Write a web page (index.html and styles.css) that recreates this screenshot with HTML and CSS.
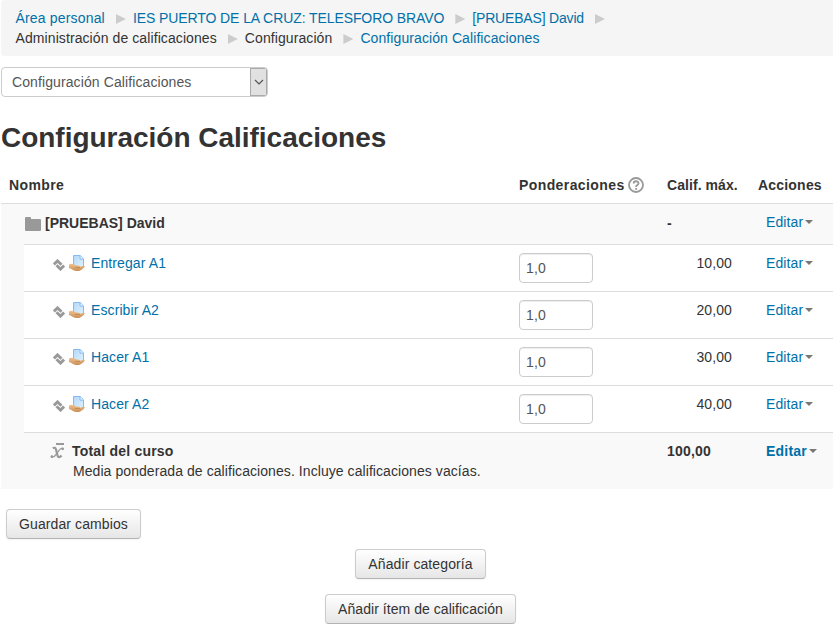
FILE: index.html
```html
<!DOCTYPE html>
<html lang="es">
<head>
<meta charset="utf-8">
<title>Configuración Calificaciones</title>
<link rel="stylesheet" href="styles.css">
</head>
<body>
<svg class="defs" aria-hidden="true">
  <defs>
    <linearGradient id="paper" x1="0" y1="0" x2="1" y2="1"><stop offset="0" stop-color="#b4d9fa"/><stop offset="1" stop-color="#e0f2ff"/></linearGradient>
    <linearGradient id="skin" x1="0" y1="0" x2="0" y2="1"><stop offset="0" stop-color="#f0c18d"/><stop offset="1" stop-color="#c98d55"/></linearGradient>
  </defs>
  <symbol id="move" viewBox="0 0 12 12"><path d="M.9 5.500 4.500 1.900 8.500 5.700M3.500 6.300 7.500 10.100 11.100 6.500" fill="none" stroke="#999" stroke-width="2.900"/></symbol>
  <symbol id="task" viewBox="0 0 16 16"><path d="M4.500.5h6.700l3.300 3.300v9.200h-10z" fill="url(#paper)" stroke="#86baf0"/><path d="M11 .8v3.300h3.300" fill="#eef8ff" stroke="#86baf0"/><path d="M0 9.500c1.700-.8 3.500-.9 5.100 0l2.400 1 2.800.2c.9.100.8 1.100.1 1.300l3.900-1.200c1.100-.3 2 .5 1.200 1.300-1.800 1.800-3.300 3.300-5.400 3.800-2.900.5-5.700-.2-7.700-1.900L0 13z" fill="url(#skin)"/><path d="M6 12.500h4l1 .2" fill="none" stroke="#b67d46" stroke-width=".6"/></symbol>
</svg>
<nav class="breadcrumb">
  <div class="crumbs first"><a class="home">Área personal</a><i></i><a>IES PUERTO DE LA CRUZ: TELESFORO BRAVO</a><i></i><a class="course">[PRUEBAS] David</a><i></i></div>
  <div class="crumbs"><span>Administración de calificaciones</span><i></i><span>Configuración</span><i></i><a>Configuración Calificaciones</a></div>
</nav>
<div class="select"><span>Configuración Calificaciones</span><b><svg width="10" height="6" viewBox="0 0 10 6"><path d="m1 1 4 4 4-4" fill="none" stroke="#555" stroke-width="1.200"/></svg></b></div>
<h1>Configuración Calificaciones</h1>
<main class="table">
  <div class="row head"><div>Nombre</div><div class="weights">Ponderaciones<svg class="help" width="16" height="16" viewBox="0 0 16 16"><circle cx="8" cy="8" r="7" fill="none" stroke="#999" stroke-width="1.800"/><path d="M5.700 6.500c0-3 4.800-3 4.800-.2C10.500 8 8.100 8 8.100 9.900M8.100 11v1.800" fill="none" stroke="#999" stroke-width="1.900"/></svg></div><div class="max">Calif. máx.</div><div class="act">Acciones</div></div>
  <div class="row category"><div class="name"><svg width="16" height="14" viewBox="0 0 16 14"><path d="M0 1Q0 0 1 0h4q1 0 1 1v1h9q1 0 1 1v10q0 1-1 1H1q-1 0-1-1z" fill="#999"/></svg><span>[PRUEBAS] David</span></div><div></div><div>-</div><div class="edit"><a>Editar</a></div></div>
  <div class="items">
    <div class="row item"><div class="name"><svg class="move"><use href="#move"/></svg><svg class="task"><use href="#task"/></svg><a>Entregar A1</a></div><div><input value="1,0"></div><div class="grade">10,00</div><div class="edit"><a>Editar</a></div></div>
    <div class="row item"><div class="name"><svg class="move"><use href="#move"/></svg><svg class="task"><use href="#task"/></svg><a>Escribir A2</a></div><div><input value="1,0"></div><div class="grade">20,00</div><div class="edit"><a>Editar</a></div></div>
    <div class="row item"><div class="name"><svg class="move"><use href="#move"/></svg><svg class="task"><use href="#task"/></svg><a>Hacer A1</a></div><div><input value="1,0"></div><div class="grade">30,00</div><div class="edit"><a>Editar</a></div></div>
    <div class="row item"><div class="name"><svg class="move"><use href="#move"/></svg><svg class="task"><use href="#task"/></svg><a>Hacer A2</a></div><div><input value="1,0"></div><div class="grade">40,00</div><div class="edit"><a>Editar</a></div></div>
    <div class="row total"><div class="name"><svg width="15" height="17" viewBox="0 0 15 17"><path d="M6 2h8" stroke="#999" stroke-width="2"/><path d="M2.800 6.300C4.600 5.200 5.600 5.800 6 7.500L7.500 13.500C7.900 15.300 9.500 15.800 11.600 13.500" fill="none" stroke="#999" stroke-width="2.200"/><path d="M13 6.600C10 5 9.200 8.600 7 11.200 5.500 13.500 4.500 15.600 1.800 14.800" fill="none" stroke="#999" stroke-width="1.300"/><circle cx="12.700" cy="6.800" r="1.400" fill="#999"/><circle cx="1.900" cy="14.700" r="1.400" fill="#999"/></svg><div><strong>Total del curso</strong><p>Media ponderada de calificaciones. Incluye calificaciones vacías.</p></div></div><div></div><div>100,00</div><div class="edit"><a>Editar</a></div></div>
  </div>
</main>
<div class="save"><button>Guardar cambios</button></div>
<div class="actions"><button>Añadir categoría</button><button class="add-item">Añadir ítem de calificación</button></div>
</body>
</html>
```

FILE: styles.css
```css
* { box-sizing: border-box; }
body { margin: 0; background: #fff; color: #333; font: 14px/20px "Liberation Sans", Arial, sans-serif; letter-spacing: .1px; overflow: hidden; }
a { color: #0070a8; }
.defs { display: block; width: 0; height: 0; }
.breadcrumb { height: 56px; margin-left: 1px; padding: 8px 14.5px; background: #f5f5f5; border-radius: 4px 0 0 4px; }
.crumbs { display: flex; height: 20px; white-space: nowrap; letter-spacing: .09px; }
.first { letter-spacing: -.09px; }
.home { letter-spacing: .17px; }
.course { letter-spacing: -.18px; }
.crumbs i { flex: none; width: 10px; height: 10px; margin: 6px 7px 0 11px; background: #ccc; clip-path: polygon(0 0, 100% 50%, 0 100%); }
.select { display: flex; width: 267px; height: 30px; margin: 11px 0 0 1px; border: 1px solid #ccc; border-radius: 4px; color: #555; line-height: 28px; overflow: hidden; }
.select span { flex: 1; padding-left: 10px; }
.select b { display: flex; align-items: center; justify-content: center; width: 17px; background: #e1e1e1; border: 1px solid #aaa; }
h1 { margin: 21px 0 9px 1px; font-size: 28px; line-height: 40px; letter-spacing: -.02px; }
.table { margin-left: 1px; }
.row { display: grid; grid-template-columns: 510px 148px 91px 1fr; padding: 8px 0 0 8px; }
.head { height: 36px; font-weight: bold; letter-spacing: .4px; }
.max { letter-spacing: .06px; }
.act { letter-spacing: .2px; }
.weights { display: flex; }
.help { margin: 2px 0 0 3px; }
.category { height: 41px; background: #f9f9f9; border-top: 1px solid #ddd; font-weight: bold; }
.category .name { display: flex; padding-left: 16px; letter-spacing: 0; }
.category .name, .category .name + div + div { padding-top: 1px; }
.category svg { margin: 4px 4px 0 0; }
.edit { padding-left: 8px; }
.edit a { display: flex; align-items: center; font-weight: normal; }
.edit a::after { content: ""; margin-left: 2px; border: 4px solid transparent; border-top-color: #777; border-bottom: 0; }
.items { padding-left: 23px; background: #f9f9f9; }
.items .row { grid-template-columns: 494px 148px 91px 1fr; padding-left: 1px; border-top: 1px solid #ddd; }
.item { height: 47px; background: #fff; }
.items .name { display: flex; }
.move { width: 12px; height: 12px; margin: 6px 4px 0 28px; }
.task { width: 16px; height: 16px; margin: 2px 6px 0 0; }
input { display: block; width: 74px; height: 30px; padding: 4px 6px; border: 1px solid #ccc; border-radius: 4px; background: #fff; box-shadow: inset 0 1px 1px rgba(0,0,0,.075); color: #555; font: inherit; letter-spacing: inherit; }
.grade { padding-right: 26px; text-align: right; }
.total { height: 57px; font-weight: bold; letter-spacing: .2px; }
.total .edit a { font-weight: bold; }
.total svg { flex: none; margin: 1px 7px 0 25px; }
.total p { margin: 0 0 0 1px; font-weight: normal; white-space: nowrap; letter-spacing: .07px; }
.save { margin: 20px 0 0 6px; }
button { display: block; height: 30px; padding: 4px 12px; border: 1px solid #ccc; border-bottom-color: #b3b3b3; border-radius: 4px; background: linear-gradient(#fff, #e6e6e6); box-shadow: inset 0 1px 0 rgba(255,255,255,.2), 0 1px 2px rgba(0,0,0,.05); color: #333; font: inherit; letter-spacing: inherit; }
.add-item { letter-spacing: .05px; }
.actions { display: flex; flex-direction: column; align-items: center; gap: 15px; width: 841px; margin-top: 10px; }
```
